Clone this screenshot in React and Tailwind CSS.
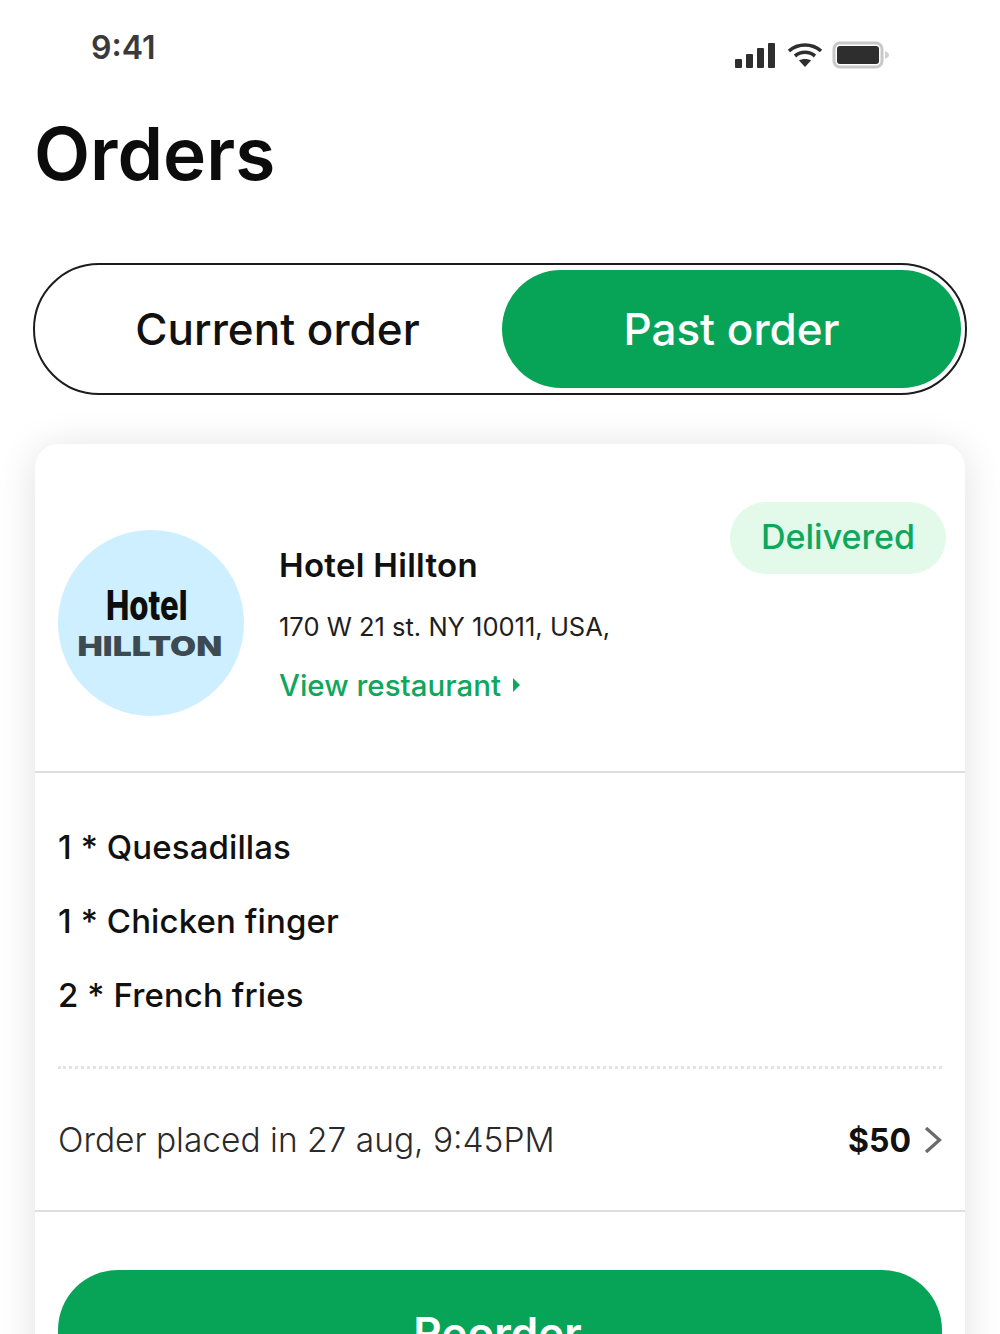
export default function App() {
  const font = { fontFamily: '"Inter", "Liberation Sans", sans-serif' };
  return (
    <div style={font} className="h-[1334px] w-[1000px] overflow-hidden bg-white text-[#111111]">
      <div className="flex h-[114px] items-start justify-between pl-[91px] pr-[110px] pt-[28px]">
        <span className="text-[32px] font-semibold leading-[40px] text-[#3a3a3a]">9:41</span>
        <div className="mt-[13px] flex items-center gap-[11px]">
          <svg width="41" height="26" viewBox="0 0 41 26" fill="#2e2e2e">
            <rect x="0" y="17" width="7" height="9" rx="1" />
            <rect x="11" y="12" width="7" height="14" rx="1" />
            <rect x="22" y="6" width="7" height="20" rx="1" />
            <rect x="33" y="1" width="7" height="25" rx="1" />
          </svg>
          <svg width="36" height="26" viewBox="0 0 36 26" fill="none" stroke="#2e2e2e" strokeWidth="3.6">
            <path d="M2 9 C11 1 25 1 34 9" />
            <path d="M8 14 C14 9 22 9 28 14" />
            <path d="M18 25 L12 18.5 C15 16.5 21 16.5 24 18.5 Z" fill="#2e2e2e" stroke="none" />
          </svg>
          <svg width="58" height="28" viewBox="0 0 58 28" className="-ml-[2px]">
            <rect x="2" y="2" width="48" height="24" rx="6" fill="none" stroke="#c8c8c8" strokeWidth="3" />
            <rect x="5" y="5" width="42" height="18" rx="3" fill="#2e2e2e" />
            <path d="M53 10 C56 11 57 13 57 14 C57 15 56 17 53 18 Z" fill="#d0d0d0" />
          </svg>
        </div>
      </div>

      <h1 className="ml-[34px] text-[73px] font-semibold leading-[80px] text-[#0c0c0c]">Orders</h1>

      <div className="ml-[33px] mt-[69px] flex h-[132px] w-[934px] items-center rounded-full border-2 border-[#1c1c1c] pl-[4px] pr-[4px]">
        <div className="flex h-[118px] flex-1 items-center justify-center pl-[14px] text-[44px] font-medium">Current order</div>
        <div className="flex h-[118px] w-[459px] items-center justify-center rounded-full bg-[#07a457] text-[44px] font-medium text-white">Past order</div>
      </div>

      <div className="ml-[35px] mt-[49px] w-[930px] rounded-t-[24px] bg-white shadow-[0_4px_40px_rgba(0,0,0,0.12)]">
        <div className="relative flex h-[329px] items-center gap-[35px] border-b-2 border-[#dedede] pl-[23px] pt-[31px]">
          <div className="flex h-[186px] w-[186px] flex-col items-center justify-center rounded-full bg-[#cdefff] pr-[2px]">
            <span className="-ml-[6px] scale-x-[0.76] text-[41px] font-extrabold leading-[44px] text-[#0d0d0d]">Hotel</span>
            <span className="mt-[3px] scale-x-[1.25] text-[27px] font-black leading-[34px] text-[#3c4a52]">HILLTON</span>
          </div>
          <div className="mt-[4px] flex flex-col">
            <span className="text-[33px] font-semibold leading-[40px] tracking-[0.3px]">Hotel Hillton</span>
            <span className="mt-[22px] text-[25.5px] leading-[40px] text-[#1e1e1e]">170 W 21 st. NY 10011, USA,</span>
            <span className="mt-[18px] flex items-center gap-[11px] text-[29.5px] font-medium leading-[40px] text-[#0ea75c]">
              View restaurant
              <svg width="9" height="16" viewBox="0 0 9 16" fill="#0ea75c"><path d="M1 1 L8 8 L1 15 Z" /></svg>
            </span>
          </div>
          <div className="absolute right-[19px] top-[58px] flex h-[72px] w-[216px] items-center justify-center rounded-full bg-[#e3faea] pb-[4px] text-[34px] font-medium text-[#0ea75c]">Delivered</div>
        </div>

        <div className="flex flex-col gap-[34px] px-[23px] pt-[54px] text-[33px] font-medium leading-[40px] tracking-[0.1px]">
          <span>1 * Quesadillas</span>
          <span>1 * Chicken finger</span>
          <span>2 * French fries</span>
        </div>

        <div className="mx-[23px] mt-[51px] border-t-[3px] border-dotted border-[#e3e3e3]"></div>

        <div className="flex h-[143px] items-center justify-between border-b-2 border-[#dedede] px-[23px] pt-[2px]">
          <span className="text-[33.5px] font-light text-[#2a2a2a]">Order placed in 27 aug, 9:45PM</span>
          <div className="flex items-center gap-[13px]">
            <span className="text-[32px] font-bold">$50</span>
            <svg width="18" height="28" viewBox="0 0 18 28" fill="none" stroke="#6a6a6a" strokeWidth="3.2" className="-mt-[1px]"><path d="M2 2 L15.5 14 L2 26" /></svg>
          </div>
        </div>

        <div className="px-[23px] pt-[58px]">
          <div className="flex h-[125px] items-center justify-center rounded-[60px] bg-[#07a457] pr-[5px] text-[44px] font-semibold text-white">Reorder</div>
        </div>
      </div>
    </div>
  );
}
